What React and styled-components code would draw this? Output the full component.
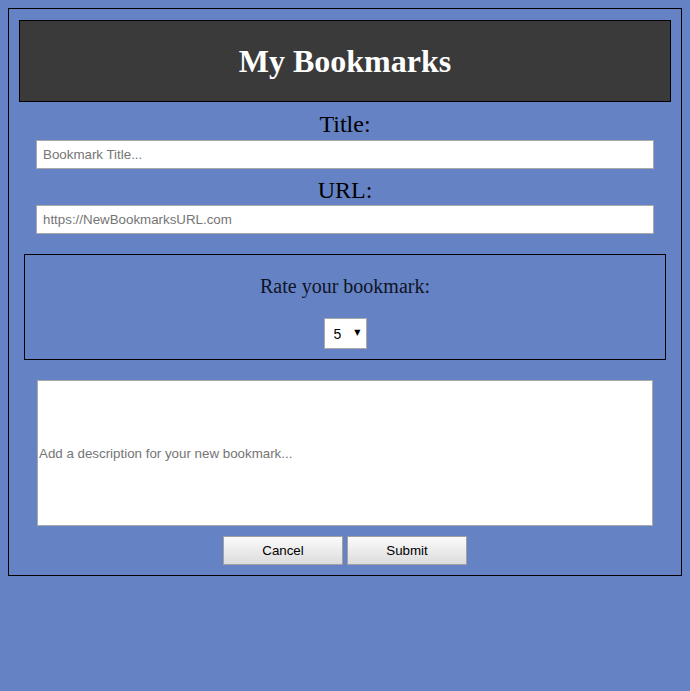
import React from "react";
import styled, { createGlobalStyle } from "styled-components";

const GlobalStyle = createGlobalStyle`
  html, body {
    background: #6583c4;
  }
  body {
    margin: 8px;
    font-family: "Liberation Serif", "Times New Roman", serif;
  }
  * { box-sizing: border-box; }
`;

const Container = styled.div`
  border: 1px solid #000;
  padding: 11px 10px 10px;
  display: flex;
  flex-direction: column;
  align-items: center;
`;

const Header = styled.header`
  align-self: stretch;
  height: 82px;
  background: #3a3a3a;
  border: 1px solid #000;
  display: flex;
  align-items: center;
  justify-content: center;
`;

const Heading = styled.h1`
  margin: 0;
  color: #fff;
  font-family: "Liberation Serif", "Times New Roman", serif;
  font-weight: bold;
  font-size: 32px;
  line-height: 37px;
`;

const FieldLabel = styled.label`
  display: block;
  font-family: "Liberation Serif", "Times New Roman", serif;
  font-size: 24px;
  line-height: 27px;
  color: #000;
  margin-top: ${(p) => p.$top}px;
`;

const TextInput = styled.input`
  display: block;
  width: calc(100% - 34px);
  height: 29px;
  margin-top: ${(p) => p.$top}px;
  border: 1px solid #a9a9a9;
  background: #fff;
  padding: 0 6px;
  font-family: "Liberation Sans", Arial, sans-serif;
  font-size: 13.33px;
  color: #000;
  outline: none;
  &::placeholder { color: #757575; }
`;

const RatingBox = styled.fieldset`
  align-self: stretch;
  margin: 20px 5px 0;
  border: 1px solid #000;
  padding: 20px 0 10px;
  display: flex;
  flex-direction: column;
  align-items: center;
  min-width: 0;
`;

const RatingLabel = styled.div`
  font-family: "Liberation Serif", "Times New Roman", serif;
  font-size: 20px;
  line-height: 23px;
  color: #0e1326;
`;

const SelectWrap = styled.div`
  position: relative;
  margin-top: 20px;
  width: 43px;
  height: 31px;
`;

const Select = styled.select`
  appearance: none;
  -webkit-appearance: none;
  width: 100%;
  height: 100%;
  border: 1px solid #a9a9a9;
  border-radius: 0;
  background: #fff;
  padding: 0 0 0 9px;
  font-family: "Liberation Sans", Arial, sans-serif;
  font-size: 14px;
  color: #000;
  outline: none;
`;

const Arrow = styled.span`
  position: absolute;
  right: 6px;
  top: 10px;
  font-size: 8px;
  line-height: 10px;
  color: #000;
  pointer-events: none;
  font-family: "DejaVu Sans", sans-serif;
`;

const DescriptionInput = styled.input`
  display: block;
  width: calc(100% - 36px);
  height: 146px;
  margin-top: 20px;
  border: 1px solid #a9a9a9;
  background: #fff;
  padding: 1px;
  font-family: "Liberation Sans", Arial, sans-serif;
  font-size: 13.33px;
  color: #000;
  outline: none;
  &::placeholder { color: #757575; }
`;

const ButtonRow = styled.div`
  display: flex;
  gap: 4px;
  margin-top: 10px;
`;

const Button = styled.button`
  width: 120px;
  height: 29px;
  border: 1px solid #a0a0a0;
  background: linear-gradient(#fbfbfb, #dcdcdc);
  font-family: "Liberation Sans", Arial, sans-serif;
  font-size: 13.33px;
  color: #000;
  padding: 0;
  cursor: pointer;
`;

export default function App() {
  return (
    <>
      <GlobalStyle />
      <Container>
        <Header>
          <Heading>My Bookmarks</Heading>
        </Header>
        <FieldLabel $top={9} htmlFor="title">Title:</FieldLabel>
        <TextInput $top={2} id="title" placeholder="Bookmark Title..." />
        <FieldLabel $top={8} htmlFor="url">URL:</FieldLabel>
        <TextInput $top={1} id="url" placeholder="https://NewBookmarksURL.com" />
        <RatingBox>
          <RatingLabel>Rate your bookmark:</RatingLabel>
          <SelectWrap>
            <Select defaultValue="5">
              <option>1</option>
              <option>2</option>
              <option>3</option>
              <option>4</option>
              <option>5</option>
            </Select>
            <Arrow>▼</Arrow>
          </SelectWrap>
        </RatingBox>
        <DescriptionInput placeholder="Add a description for your new bookmark..." />
        <ButtonRow>
          <Button>Cancel</Button>
          <Button>Submit</Button>
        </ButtonRow>
      </Container>
    </>
  );
}
